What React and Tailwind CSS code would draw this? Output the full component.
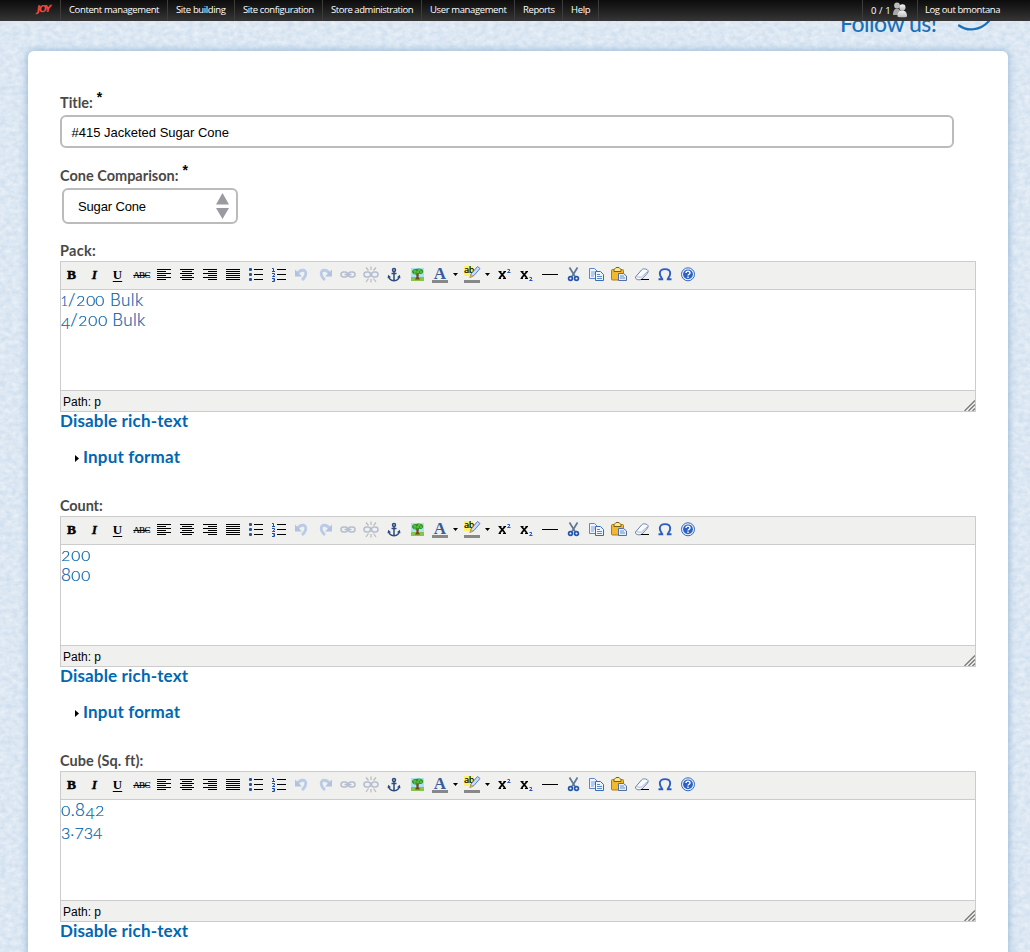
import React from "react";

const NAV = [
  { label: "Content management", size: "w-[107px] tracking-[-0.38px]" },
  { label: "Site building", size: "w-[67px] tracking-[-0.38px]" },
  { label: "Site configuration", size: "w-[88px] tracking-[-0.4px]" },
  { label: "Store administration", size: "w-[99px] tracking-[-0.44px]" },
  { label: "User management", size: "w-[93px] tracking-[-0.38px]" },
  { label: "Reports", size: "w-[48px] tracking-[-0.4px]" },
  { label: "Help", size: "w-[36px] tracking-[-0.3px]" },
];

function PaperTexture() {
  return (
    <svg className="absolute inset-0 h-full w-full" aria-hidden="true">
      <filter id="paper" x="0" y="0" width="100%" height="100%" colorInterpolationFilters="sRGB">
        <feTurbulence type="fractalNoise" baseFrequency="0.16 0.22" numOctaves="4" seed="8" />
        <feColorMatrix values="0.15 0 0 0 0.787  0.1 0 0 0 0.857  0.05 0 0 0 0.927  0 0 0 0 1" />
      </filter>
      <rect width="100%" height="100%" filter="url(#paper)" />
    </svg>
  );
}

function Users() {
  return (
    <svg width="16" height="16" viewBox="0 0 16 16">
      <defs>
        <linearGradient id="usr" x1="0" y1="0" x2="0" y2="1">
          <stop offset="0" stopColor="#f4f4f4" />
          <stop offset="1" stopColor="#b9b9b9" />
        </linearGradient>
      </defs>
      <circle cx="5" cy="3.4" r="2.9" fill="#bdbdbd" />
      <path d="M1 13C1 9 2.5 6.6 5 6.6S9 9 9 13Z" fill="#a8a8a8" />
      <circle cx="10.4" cy="5.4" r="3.1" fill="url(#usr)" />
      <path d="M5.4 14.4C5.4 10.6 7.2 8.6 10.4 8.6S15 10.8 15 14.4C13 15.6 8 15.6 5.4 14.4Z" fill="url(#usr)" />
    </svg>
  );
}

function AdminBar() {
  return (
    <div className="relative z-10 flex h-[21px] bg-linear-to-b from-[#0c0c0c] to-[#363636] font-['Open_Sans',sans-serif] text-[9.5px] leading-[19px] whitespace-nowrap text-white">
      <div className="flex w-[61px] justify-end border-r border-[#3c3c3c] pr-[10px]">
        <span className="mt-[-1px] -rotate-3 font-['DejaVu_Sans',sans-serif] text-[9.5px] font-bold tracking-[-1.6px] text-[#f2453d] italic">
          JOY
        </span>
      </div>
      {NAV.map((n) => (
        <div key={n.label} className={"border-r border-[#3c3c3c] pl-2 " + n.size}>
          {n.label}
        </div>
      ))}
      <div className="ml-auto flex w-[56px] border-x border-[#3c3c3c] pl-[8px]">
        <span className="w-[21px] pt-px tracking-[0.1px]">0 / 1</span>
        <span className="pt-[2px]">
          <Users />
        </span>
      </div>
      <div className="w-[112px] pl-[7px] tracking-[-0.41px]">Log out bmontana</div>
    </div>
  );
}

/* Ranging figures: 0-2 sit at x-height, 3 4 5 7 9 drop below the baseline. */
function Figures({ text }) {
  return (
    <>
      {text.split("").map((c, i) => {
        if (c === "0" || c === "2")
          return (
            <span key={i} className="mx-[1.1px] inline-block scale-x-120 text-[13px] leading-none tracking-normal">
              {c}
            </span>
          );
        if (c === "1")
          return (
            <span key={i} className="ml-[-0.5px] text-[13px] leading-[0] tracking-normal">
              {c}
            </span>
          );
        if ("34579".includes(c))
          return (
            <span key={i} className="align-[-3px] text-[16px] leading-[0] tracking-[-0.1px]">
              {c}
            </span>
          );
        return <span key={i}>{c}</span>;
      })}
    </>
  );
}

const glyph = "flex h-5 w-5 items-center justify-center pr-px font-['Liberation_Serif',serif] font-bold leading-none text-black";
const Ic = ({ children, faded }) => (
  <svg width="20" height="20" viewBox="0 0 20 20" className={faded ? "opacity-35" : ""} fill="none">
    {children}
  </svg>
);
const Lines = ({ rows }) => (
  <Ic>
    {rows.map(([x, w], i) => (
      <rect key={i} x={x} y={4 + i * 2} width={w} height="1" fill="#000" />
    ))}
  </Ic>
);
const Bullets = ({ children }) => (
  <Ic>
    {children}
    {[5, 10, 15].map((y) => (
      <rect key={y} x="8" y={y - 1} width="9" height="1" fill="#000" />
    ))}
  </Ic>
);
const Arrow = () => (
  <svg width="5" height="3" viewBox="0 0 5 3">
    <path d="M0 0H5L2.5 3Z" fill="#000" />
  </svg>
);
const links = (
  <g stroke="#46639a" strokeWidth="1.5">
    <rect x="3" y="7" width="6.5" height="5" rx="2.5" />
    <rect x="10.5" y="7" width="6.5" height="5" rx="2.5" />
  </g>
);

function Toolbar() {
  const L = [3, 14];
  return (
    <div className="flex h-[28px] gap-[3px] border-b border-[#ccc] bg-[#f0f0ee] pt-[3px] pl-px">
      <span className={glyph + " text-[13.5px] [-webkit-text-stroke:0.5px_#000]"}>B</span>
      <span className={glyph + " text-[13.5px] italic [-webkit-text-stroke:0.3px_#000]"}>I</span>
      <span className={glyph + " pb-[2px] text-[13px] underline underline-offset-[2px]"}>U</span>
      <span className={glyph + " pl-[2px] text-[9px] font-normal tracking-[-0.7px] line-through [-webkit-text-stroke:0.2px_#000]"}>ABC</span>
      <Lines rows={[L, [3, 9], L, [3, 9], L, [3, 9]]} />
      <Lines rows={[L, [5, 10], L, [5, 10], L, [5, 10]]} />
      <Lines rows={[L, [8, 9], L, [8, 9], L, [8, 9]]} />
      <Lines rows={[L, L, L, L, L, L]} />
      <Bullets>
        {[4, 9, 14].map((y) => (
          <rect key={y} x="3" y={y - 1} width="3" height="3" rx="1" fill="#2a5599" />
        ))}
      </Bullets>
      <Bullets>
        <g stroke="#1f4fae" strokeWidth="1">
          <path d="M3 3.5H4.5V6.5M3 6.5H6" />
          <path d="M3 8.5H5.5V10L3.5 11.5H6" />
          <path d="M3 13.5H5.5V16.5H3M4 15H5.5" />
        </g>
      </Bullets>
      <Ic faded>
        <path d="M5.5 8.500C8 4.500 14 3.800 13.800 8.500C13.600 11.500 12 13.500 10 15" stroke="#5b86d8" strokeWidth="2.800" />
        <path d="M3 4.500V11.500H10Z" fill="#3f70cc" />
      </Ic>
      <Ic faded>
        <path d="M14.500 8.500C12 4.500 6 3.800 6.200 8.500C6.400 11.500 8 13.500 10 15" stroke="#5b86d8" strokeWidth="2.800" />
        <path d="M17 4.500V11.500H10Z" fill="#3f70cc" />
      </Ic>
      <Ic faded>
        {links}
        <path d="M6.500 9.500H13.500" stroke="#46639a" strokeWidth="1.400" />
      </Ic>
      <Ic faded>
        {links}
        <path d="M10 1.500V5M5 2.500L7.500 5.500M15 2.500L12.500 5.500M10 14V17.500M5 17L7.500 13.500M15 17L12.500 13.500" stroke="#555" strokeWidth="1.200" />
      </Ic>
      <Ic>
        <g stroke="#2b4a80" strokeWidth="1.500">
          <circle cx="10" cy="5" r="1.500" />
          <path d="M10 6.500V15M7.500 8.500H12.500M4.500 11C4.800 14 7 15.500 10 15.700C13 15.500 15.200 14 15.500 11" />
        </g>
        <path d="M3.500 13.200L4.300 9.800L7 12.200ZM16.500 13.200L15.700 9.800L13 12.200Z" fill="#2b4a80" />
      </Ic>
      <Ic>
        <rect x="4" y="3" width="13" height="13" fill="#a8e2f7" />
        <rect x="4" y="12" width="13" height="4" fill="#86c44c" />
        <path d="M9 8H12L11.500 12L13 14.500H8L9.500 12Z" fill="#7b4518" />
        <path d="M5 7C4.500 5 7 3.500 9 4C11 2.800 15.500 3.500 16 5.500C17 8 14.500 9.500 12.500 8.700C10.500 10 6 10.200 5 7Z" fill="#2f9427" />
        <path d="M6.500 6H9M11 5H13.500M9.500 7H12M13 7H15M7 8H8.500" stroke="#8bdc50" />
      </Ic>
      <div className="flex w-[29px] gap-[3px]">
        <div className="flex w-5 flex-col items-center">
          <span className="h-[15px] font-['Liberation_Serif',serif] text-[17px] leading-[18px] font-bold text-[#3a5a9c]">A</span>
          <span className="h-[3px] w-4 bg-[#888]" />
        </div>
        <span className="flex h-[18px] items-center">
          <Arrow />
        </span>
      </div>
      <div className="flex w-[29px] gap-[3px]">
        <div className="flex w-5 flex-col items-center">
          <div className="flex h-[15px] w-4 items-start">
            <span className="mt-px h-[10px] w-[9px] bg-[#fff26a] font-['Open_Sans',sans-serif] text-[9px] leading-[8px] font-semibold tracking-[-0.5px] text-black">ab</span>
            <svg width="8" height="13" viewBox="0 0 8 13" className="overflow-visible">
              <path d="M-3 12.500L-2 9L4.500 1.500L7 3.500L1 10.500Z" fill="#c8ddfa" stroke="#5c7db8" />
              <path d="M-3.500 13L-2.500 9.500L0.500 11Z" fill="#d9a92c" />
            </svg>
          </div>
          <span className="h-[3px] w-4 bg-[#888]" />
        </div>
        <span className="flex h-[18px] items-center">
          <Arrow />
        </span>
      </div>
      <Ic>
        <path d="M5.500 6.500L11 13M11 6.500L5.500 13" stroke="#000" strokeWidth="1.800" />
        <path d="M4.500 6.500H7.500M9.500 6.500H12M4.500 13.500H7M9 13.500H12" stroke="#000" />
        <path d="M13.500 4.500H15.500V6L13.500 7.500H16.500" stroke="#2455c0" />
      </Ic>
      <Ic>
        <path d="M4.500 6.500L10 13M10 6.500L4.500 13" stroke="#000" strokeWidth="1.800" />
        <path d="M3.500 6.500H6.500M8.500 6.500H11M3.500 13.500H6M8 13.500H11" stroke="#000" />
        <path d="M12.500 12.500H14.500V14L12.500 15.500H15.500" stroke="#2455c0" />
      </Ic>
      <Ic>
        <rect x="2" y="9" width="16" height="1" fill="#000" />
      </Ic>
      <Ic>
        <path d="M6.500 2.500L12 11.500M14.500 2.500L9 11.500" stroke="#5e7896" strokeWidth="1.700" />
        <circle cx="7.500" cy="13.500" r="1.900" stroke="#2456b0" strokeWidth="1.700" />
        <circle cx="13.500" cy="13.500" r="1.900" stroke="#2456b0" strokeWidth="1.700" />
      </Ic>
      <Ic>
        <path d="M3.500 3.500H8.500L11.500 6.500V13.500H3.500Z" fill="#eef5ff" stroke="#5a87cc" />
        <path d="M5 7H9M5 9H9M5 11H8" stroke="#7ca2dd" />
        <path d="M9.500 6.500H14.500L17.500 9.500V15.500H9.500Z" fill="#eef5ff" stroke="#376ab8" />
        <path d="M11 9.500H14M11 11.500H16M11 13.500H16" stroke="#5b8bd4" />
      </Ic>
      <Ic>
        <rect x="2.500" y="4.500" width="12" height="10.500" rx="1" fill="#f0b92f" stroke="#b17a13" />
        <path d="M5 6.500V4.500L7 2.500H10L12 4.500V6.500Z" fill="#fce88c" stroke="#7d5d19" />
        <path d="M9.500 8.500H14.500L17.500 11V15.500H9.500Z" fill="#e5eefb" stroke="#536f9f" />
        <path d="M11 11H15M11 13H16" stroke="#6a8fc9" />
      </Ic>
      <Ic>
        <path d="M3.500 12L9.500 5C10.500 3.800 12 3.700 13.500 4C16 4.500 16.800 6 15.500 8L10 14C8 15.500 3 15 3.500 12Z" fill="#f7faff" stroke="#6d80a8" />
        <path d="M4 11.300C5 12 8 12.500 9.500 12L15.500 6.500" stroke="#a9b9d6" />
        <rect x="9" y="14" width="8" height="1" fill="#000" />
      </Ic>
      <Ic>
        <path d="M3.500 14.300H7.300C7.300 13 4.800 11.800 4.800 8.300C4.800 5.500 6.800 4.100 10 4.100S15.200 5.500 15.200 8.300C15.200 11.800 12.700 13 12.700 14.300H16.500" stroke="#2c5cc0" strokeWidth="1.900" />
      </Ic>
      <Ic>
        <circle cx="10" cy="9.300" r="6.500" fill="#eaf2ff" stroke="#3467c2" />
        <circle cx="10" cy="9.300" r="4.900" fill="#2d62c4" />
        <path d="M8 8C8 5.500 12 5.500 12 8C12 9.300 10 9.200 10 10.600M10 11.500V12.900" stroke="#fff" strokeWidth="1.400" />
      </Ic>
    </div>
  );
}

function Editor({ label, labelClass, children }) {
  return (
    <section className="h-[255px]">
      <h3 className={"h-[20px] text-[14.5px] leading-[19px] font-bold text-[#494949] " + labelClass}>{label}</h3>
      <div className="h-[151px] w-[916px] border border-[#ccc]">
        <Toolbar />
        <div className="h-[100px] text-[17px] leading-[20px] font-light tracking-[0.4px] text-[#005fae] [-webkit-text-stroke:0.2px_#005fae]">{children}</div>
        <div className="flex h-[21px] justify-between border-t border-[#ccc] bg-[#f0f0ee] pl-[2px] font-['Liberation_Sans',sans-serif] text-[12px] leading-[22px] text-black">
          <span>Path: p</span>
          <svg width="11" height="11" viewBox="0 0 11 11" className="mt-[9px]">
            <path d="M0.500 11L11 0.500M4.500 11L11 4.500M8.500 11L11 8.500" stroke="#777" strokeWidth="1.300" />
          </svg>
        </div>
      </div>
      <a className="block h-[18px] text-[17px] leading-[17px] font-bold tracking-[0.16px] text-[#0067b3]">Disable rich-text</a>
      <div className="mt-[18px] flex h-[18px] items-center pl-[15px]">
        <svg width="4" height="7" viewBox="0 0 4 7" className="mt-[3px] mr-1">
          <path d="M0 0L4 3.500L0 7Z" fill="#000" />
        </svg>
        <a className="mt-[-1px] text-[17px] leading-[18px] font-bold tracking-[0.16px] text-[#0067b3]">Input format</a>
      </div>
    </section>
  );
}

const Required = () => (
  <span className="ml-[4px] align-[6px] font-['Liberation_Sans',sans-serif] text-[14px] leading-[0] font-bold tracking-normal text-black">*</span>
);

export default function App() {
  return (
    <div className="relative h-[952px] w-full overflow-hidden bg-[#dbe7f4] font-['Lato',sans-serif]">
      <PaperTexture />
      <AdminBar />
      <header className="relative flex h-[30px] items-start overflow-hidden pl-[840px]">
        <span className="mt-[-13px] w-[118px] font-['Lato',sans-serif] text-[23px] leading-[30px] font-medium tracking-[-0.5px] text-[#1a70b8]">Follow us!</span>
        <svg width="34" height="11" viewBox="0 0 34 11">
          <path d="M1 4.500C9 10.500 22 10 31 0" stroke="#1a70b8" strokeWidth="2.200" fill="none" strokeLinecap="round" />
        </svg>
      </header>
      <main className="relative ml-[28px] h-[960px] w-[980px] rounded-md bg-white pt-[41px] pl-[32px] shadow-[0_0_7px_1px_#9ab8d6]">
        <h3 className="h-[23px] text-[14.5px] leading-[21px] font-bold text-[#494949]">
          Title:
          <Required />
        </h3>
        <div className="flex h-[33px] w-[894px] items-center rounded-md border-2 border-[#bbb] bg-white pt-[2px] pl-[9.5px] font-['Liberation_Sans',sans-serif] text-[13px] text-black">
          #415 Jacketed Sugar Cone
        </div>
        <h3 className="mt-[17px] h-[23px] text-[14.5px] leading-[21px] font-bold text-[#494949]">
          Cone Comparison:
          <Required />
        </h3>
        <div className="ml-[2px] flex h-[36px] w-[176px] items-center justify-between rounded-md border-2 border-[#bbb] bg-white pr-[6px] pl-[14px] font-['Liberation_Sans',sans-serif] text-[13px] tracking-[-0.15px] text-black">
          <span className="pt-px">Sugar Cone</span>
          <svg width="15" height="26" viewBox="0 0 15 26">
            <path d="M7.500 0L14 11.500H1ZM7.500 26L14 15H1Z" fill="#999ba0" />
          </svg>
        </div>
        <div className="mt-[17px]">
          <Editor label="Pack:" labelClass="tracking-[0.3px]">
            <p><Figures text="1/200" /> Bulk</p>
            <p><Figures text="4/200" /> Bulk</p>
          </Editor>
          <Editor label="Count:" labelClass="tracking-[-0.1px]">
            <p><Figures text="200" /></p>
            <p><Figures text="800" /></p>
          </Editor>
          <Editor label="Cube (Sq. ft):" labelClass="tracking-[0.05px]">
            <p className="h-5"><Figures text="0.842" /></p>
            <p className="h-5"><Figures text="3.734" /></p>
          </Editor>
        </div>
      </main>
    </div>
  );
}
